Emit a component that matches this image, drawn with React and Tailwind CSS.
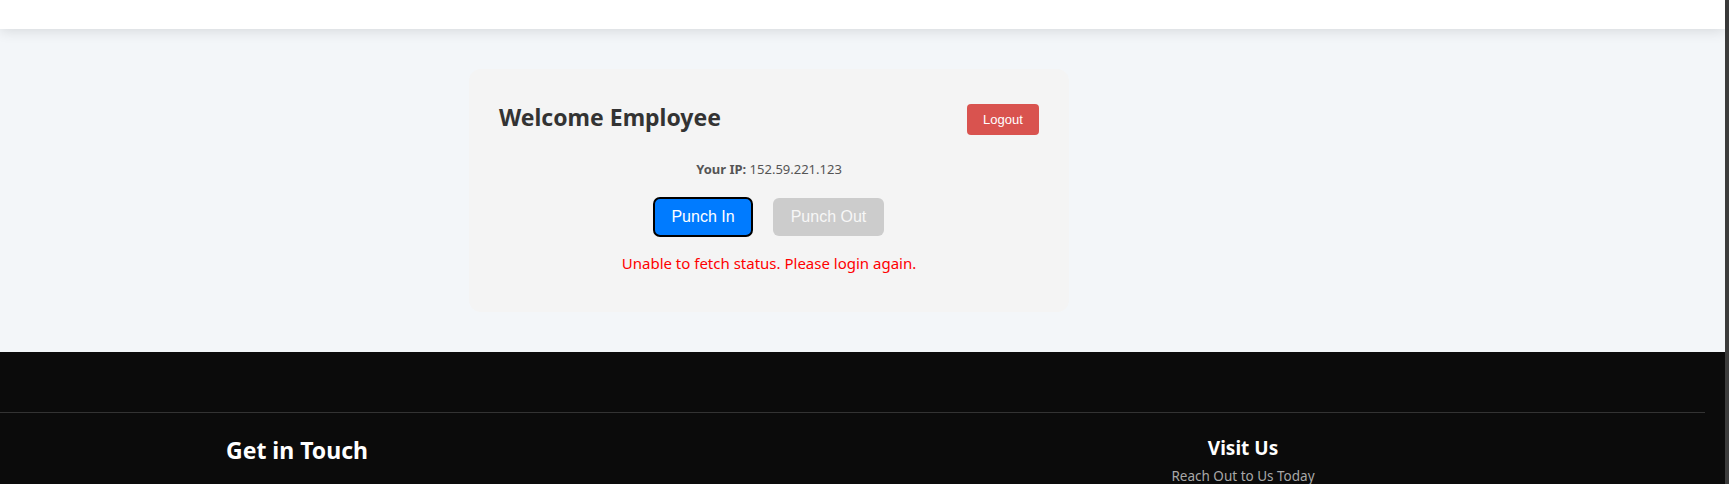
import React, { useState } from 'react';

const sans = "font-['Noto_Sans','Open_Sans',sans-serif]";
const arial = "font-['Liberation_Sans',Arial,sans-serif]";

const Dashboard = () => {
  const [error] = useState('Unable to fetch status. Please login again.');
  const ip = '152.59.221.123';

  return (
    <div className="w-[600px] rounded-xl bg-[#f4f4f4] px-[30px] pt-[35px] pb-[39px]">
      <div className="flex items-start justify-between">
        <h2 className={`${sans} text-[23px] font-bold leading-[27px] text-[#333]`}>
          Welcome Employee
        </h2>
        <button className={`${arial} h-[31px] w-[72px] rounded bg-[#d9534f] text-[13px] text-white`}>
          Logout
        </button>
      </div>
      <p className={`${sans} mt-[24px] text-center text-[13px] leading-5 text-[#555]`}>
        <strong>Your IP:</strong> {ip}
      </p>
      <div className="mt-[19px] flex justify-center gap-[21px]">
        <button className={`${arial} h-[38px] w-[98px] rounded-md bg-[#007bff] text-base text-white outline-2 outline-offset-[-1px] outline-black`}>
          Punch In
        </button>
        <button disabled className={`${arial} h-[38px] w-[111px] rounded-md bg-[#ccc] text-base text-[#f7f7f7]`}>
          Punch Out
        </button>
      </div>
      {error && (
        <p className={`${sans} mt-[17px] text-center text-[15px] leading-5 text-[#ff0000]`}>
          {error}
        </p>
      )}
    </div>
  );
};

const App = () => {
  return (
    <div className="flex min-h-[484px] w-full">
      <div className="flex-1 bg-[#0b0b0b]">
        <header className="relative z-10 h-[29px] bg-white shadow-[0_2px_14px_rgba(0,0,0,0.12)]" />
        <main className="bg-[#f3f6f9] py-10 pl-[469px]">
          <Dashboard />
        </main>
        <footer className="bg-[#0b0b0b] pt-[60px]">
          <div className="mr-5 border-t border-[#333]" />
          <div className="flex pt-[20px]">
            <div className="w-[1000px] pl-[226px] pt-[2px]">
              <h3 className={`${sans} text-[23px] font-bold leading-[30px] text-white`}>Get in Touch</h3>
            </div>
            <div className="w-[486px] pt-[2px] text-center">
              <h3 className={`${sans} text-[19px] font-bold leading-[26px] text-white`}>Visit Us</h3>
              <p className={`${sans} mt-[5px] text-[13.5px] leading-5 text-[#a8a8a8]`}>Reach Out to Us Today</p>
            </div>
          </div>
        </footer>
      </div>
      <div className="w-[4px] bg-[#3c3c3c]" />
    </div>
  );
};

export default App;
